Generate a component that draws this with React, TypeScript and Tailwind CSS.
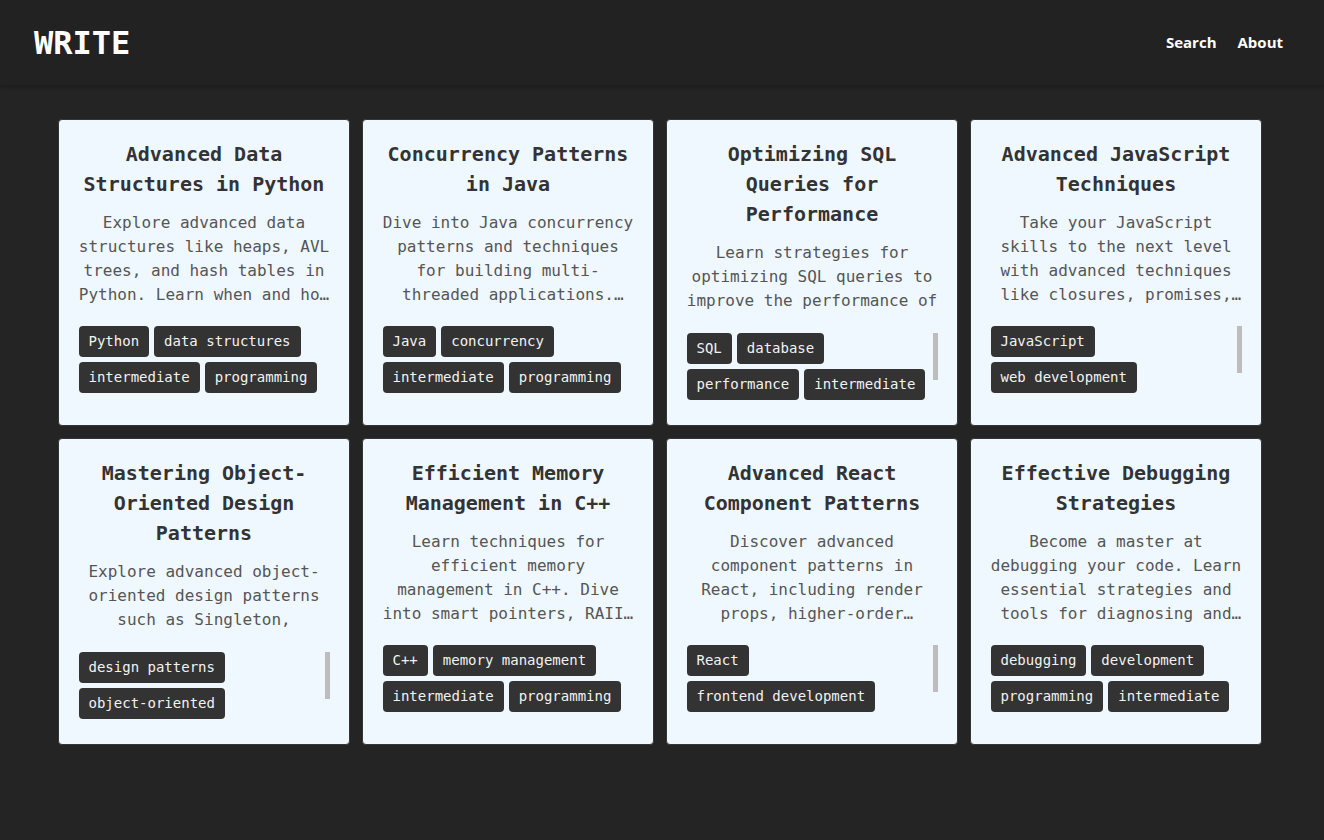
import React, { useLayoutEffect, useRef, useState } from "react";

interface Post {
	title: string;
	description: string;
	tags: string[];
}

const POSTS: Post[] = [
	{
		title: "Advanced Data Structures in Python",
		description:
			"Explore advanced data structures like heaps, AVL trees, and hash tables in Python. Learn when and how to use them effectively.",
		tags: ["Python", "data structures", "intermediate", "programming"],
	},
	{
		title: "Concurrency Patterns in Java",
		description:
			"Dive into Java concurrency patterns and techniques for building multi-threaded applications. Learn about locks, executors and futures.",
		tags: ["Java", "concurrency", "intermediate", "programming"],
	},
	{
		title: "Optimizing SQL Queries for Performance",
		description:
			"Learn strategies for optimizing SQL queries to improve the performance of your database applications.",
		tags: ["SQL", "database", "performance", "intermediate", "optimization"],
	},
	{
		title: "Advanced JavaScript Techniques",
		description:
			"Take your JavaScript skills to the next level with advanced techniques like closures, promises, async/await, and more.",
		tags: ["JavaScript", "web development", "programming", "intermediate"],
	},
	{
		title: "Mastering Object-Oriented Design Patterns",
		description:
			"Explore advanced object-oriented design patterns such as Singleton, Factory, Observer, and Strategy.",
		tags: ["design patterns", "object-oriented", "programming", "advanced"],
	},
	{
		title: "Efficient Memory Management in C++",
		description:
			"Learn techniques for efficient memory management in C++. Dive into smart pointers, RAII, and custom allocators.",
		tags: ["C++", "memory management", "intermediate", "programming"],
	},
	{
		title: "Advanced React Component Patterns",
		description:
			"Discover advanced component patterns in React, including render props, higher-order components, and hooks.",
		tags: ["React", "frontend development", "intermediate", "programming"],
	},
	{
		title: "Effective Debugging Strategies",
		description:
			"Become a master at debugging your code. Learn essential strategies and tools for diagnosing and fixing bugs.",
		tags: ["debugging", "development", "programming", "intermediate"],
	},
];

const mono = "font-['DejaVu_Sans_Mono',monospace]";

const TagList: React.FC<{ tags: string[] }> = ({ tags }) => {
	const listRef = useRef<HTMLDivElement>(null);
	const [overflows, setOverflows] = useState(false);

	useLayoutEffect(() => {
		const el = listRef.current;
		if (el) setOverflows(el.scrollHeight > el.clientHeight + 1);
	}, [tags]);

	return (
		<div className="relative mt-[19px] shrink-0">
			<div
				ref={listRef}
				className="flex max-h-[72px] flex-wrap content-start gap-[5px] overflow-y-auto">
				{tags.map((tag) => (
					<span
						key={tag}
						className="rounded bg-[#333] px-[10px] py-[5px] text-[14px] leading-[21px] text-[#f2f2f2]">
						{tag}
					</span>
				))}
			</div>
			{/* thin scroll thumb shown when the tags run past two rows */}
			{overflows && (
				<div className="absolute top-0 right-0 h-[47px] w-[5px] bg-[#bdbdbd]" />
			)}
		</div>
	);
};

const PostCard: React.FC<{ post: Post }> = ({ post }) => (
	<div className="flex h-[307px] flex-col rounded border border-[#353535] bg-[#f0f8ff] px-[19.5px] pt-[19px] pb-5 text-center">
		<h2 className="mb-3 shrink-0 text-[20px] leading-[30px] font-bold text-[#333]">
			{post.title}
		</h2>
		<p className="line-clamp-4 min-h-0 overflow-hidden text-[16px] leading-6 text-[#555]">
			{post.description}
		</p>
		<TagList tags={post.tags} />
	</div>
);

export default function App() {
	return (
		<div className={`min-h-screen bg-[#242424] ${mono}`}>
			<header className="flex h-[85px] items-center justify-between bg-[#222] pr-[41px] pl-[34px] shadow-[0_2px_4px_rgba(0,0,0,0.25)]">
				<a className="text-[32px] leading-none font-bold text-white">WRITE</a>
				<nav className="flex gap-[21px] font-['Open_Sans',sans-serif] text-[15px] font-bold text-white">
					<a>Search</a>
					<a>About</a>
				</nav>
			</header>

			<main className="pt-[34px] pb-10 pl-[58px]">
				<div className="grid w-[1204px] grid-cols-4 gap-3">
					{POSTS.map((post) => (
						<PostCard key={post.title} post={post} />
					))}
				</div>
			</main>
		</div>
	);
}
